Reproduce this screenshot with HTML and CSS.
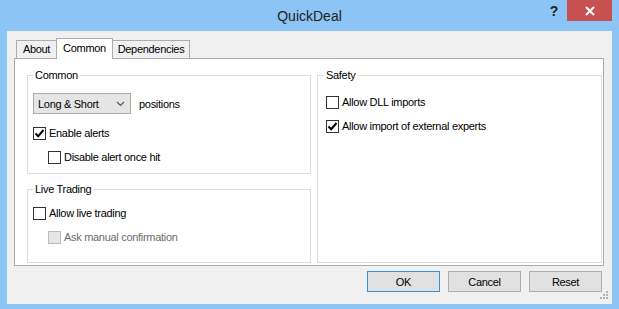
FILE: index.html
```html
<!DOCTYPE html>
<html lang="en">
  <head>
    <meta charset="UTF-8" />
    <title>QuickDeal</title>
    <link rel="stylesheet" href="styles.css">
  </head>
  <body>
    <div class="window">
      <div class="titlebar">
        <div></div>
        <div class="title">QuickDeal</div>
        <div class="controls">
          <span class="help">?</span>
          <span class="close">
            <svg width="10" height="10" viewBox="0 0 10 10">
              <path d="M1 1 L9 9 M9 1 L1 9" stroke="#fff" stroke-width="2" />
            </svg>
          </span>
        </div>
      </div>

      <div class="client">
        <div class="tabs">
          <div class="tab about">About</div>
          <div class="tab common active">Common</div>
          <div class="tab deps">Dependencies</div>
        </div>

        <div class="panel">
          <div class="leftcol">
            <fieldset class="group common-group">
              <legend>Common</legend>
              <div class="combo-row">
                <div class="combo">
                  <span>Long &amp; Short</span>
                  <svg width="9" height="6" viewBox="0 0 9 6">
                    <path d="M1 1 L4.5 4.5 L8 1" fill="none" stroke="#555" stroke-width="1.2" />
                  </svg>
                </div>
                <span>positions</span>
              </div>
              <label class="check first">
                <span class="box checked">
                  <svg width="11" height="11" viewBox="0 0 11 11">
                    <path d="M1.5 5.5 L4.2 8.2 L9.5 2" fill="none" stroke="#000" stroke-width="2" />
                  </svg>
                </span>
                Enable alerts
              </label>
              <label class="check sub">
                <span class="box"></span>
                Disable alert once hit
              </label>
            </fieldset>

            <fieldset class="group live-group">
              <legend>Live Trading</legend>
              <label class="check first">
                <span class="box"></span>
                Allow live trading
              </label>
              <label class="check sub disabled">
                <span class="box"></span>
                Ask manual confirmation
              </label>
            </fieldset>
          </div>

          <fieldset class="group safety-group">
            <legend>Safety</legend>
            <label class="check first">
              <span class="box"></span>
              Allow DLL imports
            </label>
            <label class="check">
              <span class="box checked">
                <svg width="11" height="11" viewBox="0 0 11 11">
                  <path d="M1.5 5.5 L4.2 8.2 L9.5 2" fill="none" stroke="#000" stroke-width="2" />
                </svg>
              </span>
              Allow import of external experts
            </label>
          </fieldset>
        </div>

        <div class="buttons">
          <button class="default">OK</button>
          <button>Cancel</button>
          <button>Reset</button>
        </div>

        <svg class="grip" width="8" height="8" viewBox="0 0 8 8">
          <rect x="6" y="0" width="2" height="2" fill="#b5b5b5" />
          <rect x="3" y="3" width="2" height="2" fill="#b5b5b5" />
          <rect x="6" y="3" width="2" height="2" fill="#b5b5b5" />
          <rect x="0" y="6" width="2" height="2" fill="#b5b5b5" />
          <rect x="3" y="6" width="2" height="2" fill="#b5b5b5" />
          <rect x="6" y="6" width="2" height="2" fill="#b5b5b5" />
        </svg>
      </div>
    </div>
  </body>
</html>
```

FILE: styles.css
```css
* {
  margin: 0px;
  padding: 0px;
  box-sizing: border-box;
}
body {
  background-color: #8cc4f5;
  font-family: "Liberation Sans", Arial, sans-serif;
  font-size: 11px;
  letter-spacing: -0.3px;
  color: #000;
}
.window {
  width: 619px;
  height: 309px;
  background-color: #8cc4f5;
}
.titlebar {
  height: 31px;
  display: grid;
  grid-template-columns: 1fr auto 1fr;
}
.title {
  font-size: 14px;
  letter-spacing: 0px;
  color: #222;
  padding-top: 8px;
}
.controls {
  display: flex;
  justify-content: flex-end;
  align-items: flex-start;
  padding-right: 7px;
}
.help {
  width: 26px;
  text-align: center;
  font-weight: bold;
  font-size: 14px;
  color: #222;
  padding-top: 3px;
}
.close {
  width: 45px;
  height: 21px;
  background-color: #c75050;
  display: flex;
  align-items: center;
  justify-content: center;
}
.client {
  position: relative;
  height: 273px;
  margin: 0px 7px;
  background-color: #f0f0f0;
  padding: 7px 8px 0px 7px;
}
.tabs {
  height: 20px;
  display: flex;
  align-items: flex-end;
  padding-left: 2px;
}
.tab {
  height: 18px;
  border: 1px solid #acacac;
  border-bottom: none;
  background-color: #f0f0f0;
  text-align: center;
  line-height: 17px;
}
.about {
  width: 41px;
}
.common {
  width: 57px;
  margin-left: -1px;
}
.deps {
  width: 78px;
  margin-left: -1px;
}
.tab.active {
  height: 21px;
  margin-bottom: -1px;
  background-color: #fff;
  position: relative;
  z-index: 1;
  line-height: 18px;
}
.panel {
  height: 208px;
  border: 1px solid #acacac;
  background-color: #fff;
  padding: 9px 1px 2px 12px;
  display: flex;
  gap: 6px;
}
.leftcol {
  width: 284px;
  display: flex;
  flex-direction: column;
  gap: 8px;
}
.group {
  border: 1px solid #dcdcdc;
  padding: 0px 0px 0px 5px;
  min-width: 0px;
}
.group legend {
  padding: 0px 2px;
  line-height: 14px;
}
.common-group {
  height: 106px;
}
.live-group {
  height: 81px;
}
.safety-group {
  width: 285px;
  height: 195px;
  padding-left: 8px;
}
.safety-group legend {
  margin-left: -2px;
}
.combo-row {
  margin-top: 11px;
  display: flex;
  align-items: center;
  gap: 8px;
}
.combo {
  width: 98px;
  height: 21px;
  border: 1px solid #acacac;
  background-color: #e5e5e5;
  display: flex;
  align-items: center;
  justify-content: space-between;
  padding: 0px 5px 0px 4px;
}
.check {
  height: 24px;
  display: flex;
  align-items: center;
  gap: 3px;
}
.common-group .check.first {
  margin-top: 7px;
}
.live-group .check.first {
  margin-top: 5px;
}
.safety-group .check.first {
  margin-top: 8px;
}
.check.sub {
  margin-left: 15px;
}
.box {
  width: 13px;
  height: 13px;
  border: 1px solid #333;
  background-color: #fff;
  display: flex;
  align-items: center;
  justify-content: center;
}
.disabled {
  color: #6d6d6d;
}
.disabled .box {
  border-color: #bcbcbc;
  background-color: #e6e6e6;
}
.buttons {
  margin-top: 5px;
  margin-right: 2px;
  display: flex;
  justify-content: flex-end;
  gap: 8px;
}
button {
  width: 73px;
  height: 21px;
  border: 1px solid #adadad;
  background-color: #e1e1e1;
  font-family: "Liberation Sans", Arial, sans-serif;
  font-size: 11px;
  letter-spacing: -0.3px;
  color: #000;
}
button.default {
  border-color: #3c8fd9;
}
.grip {
  position: absolute;
  right: 4px;
  bottom: 5px;
}
```
